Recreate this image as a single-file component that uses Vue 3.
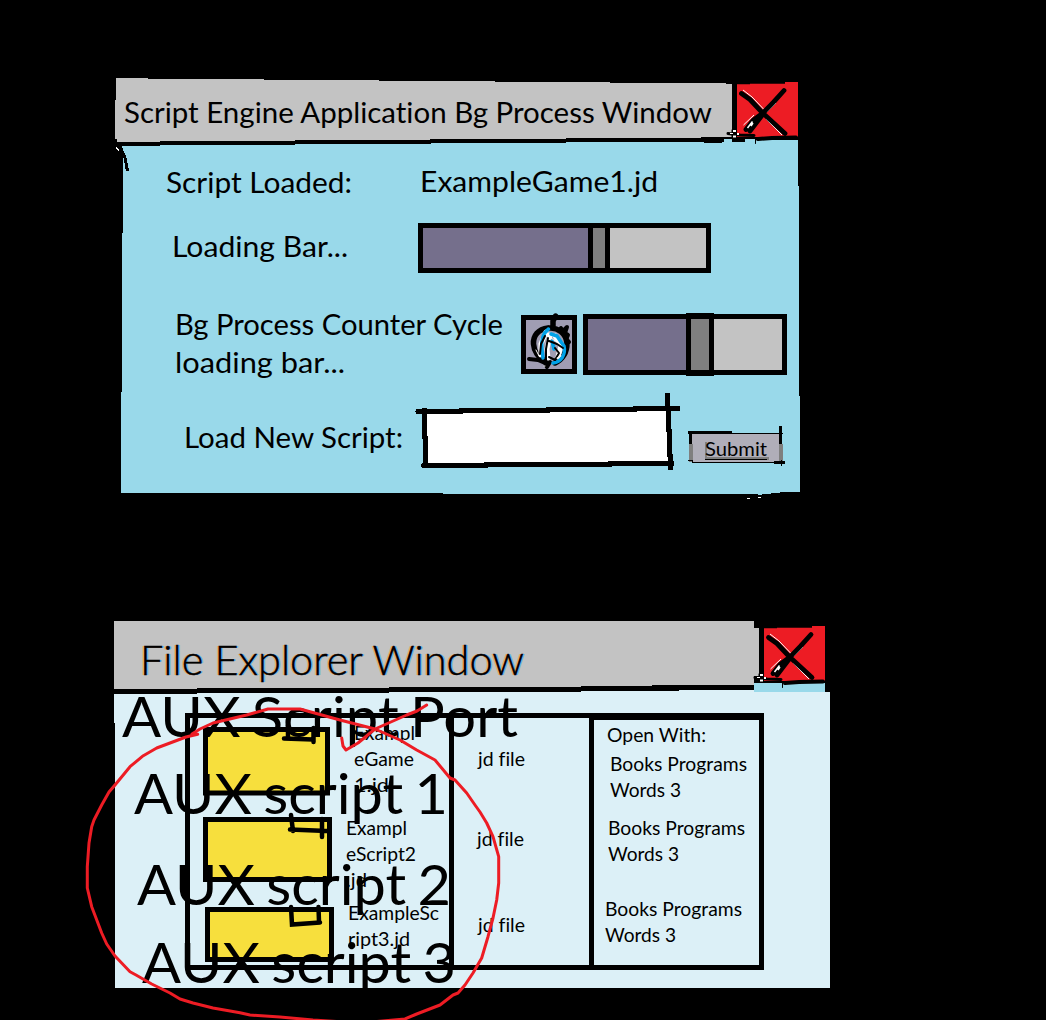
<script setup>
// Stretches a line of text horizontally until it spans the given width.
const vFit = {
  mounted(el, { value }) {
    const natural = el.getBoundingClientRect().width
    el.style.width = `${value}px`
    el.style.transform = `scaleX(${(value / natural).toFixed(4)})`
  },
}

const files = [
  { id: 'one', lines: [['Exampl', 61], ['eGame', 60], ['1.jd', 35]], tab: 'M85 -2V10M81 11.5L110 12.5M110.5 1V15' },
  { id: 'two', lines: [['Exampl', 61], ['eScript2', 70], ['.jd', 21]], tab: 'M88 -2L90 14M87 12.5L124 14M119 2V20' },
  { id: 'three', lines: [['ExampleSc', 91], ['ript3.jd', 62]], tab: 'M86 0L87 17.5L115 15.5M113.5 0L114 15' },
]
const programs = ['first', 'second', 'third']
const notes = [
  { text: 'AUX Script Port', width: 396, id: 'port' },
  { text: 'AUX script 1', width: 314, id: 'n1' },
  { text: 'AUX script 2', width: 314, id: 'n2' },
  { text: 'AUX script 3', width: 314, id: 'n3' },
]
</script>

<template>
  <main class="desktop">
    <svg class="defs" width="0" height="0">
      <symbol id="close" viewBox="-8 0 76 62">
        <path fill="#ed1c24" d="M5 2.3H18V1.7H53V0H66V55H5Z" />
        <path fill="none" stroke="#fff" stroke-width="1" d="M11 8L20 15L32 27.500M34 37L50 53M35 30L44 21M11.500 43L22 33" />
        <g fill="none" stroke="#000" stroke-linecap="round" stroke-linejoin="round">
          <path stroke-width="4.800" d="M9.500 11.500L18 17.500L30.700 31L53 51.500M52 8.500L41.300 20.300L30.700 31.300L21 38.500L14 47.500M31 32L18 49" />
          <path stroke-width="3" d="M-4 51.500L8 53L22 53.500" />
          <path stroke-width="4" d="M26 57L40 56L64 55.500" />
          <path stroke-width="1" d="M23.500 56V61.500M0 48V55" />
        </g>
        <path stroke="#fff" stroke-width="1.500" fill="none" d="M15.500 46L20.500 39.500M19 44L21 41" />
        <path fill="#fff" d="M1 48h3v2h-3zM-2 51h3v1h-3zM5 51h2v2h-2zM1 53.500h3v2h-3z" />
      </symbol>
    </svg>

    <section class="window engine">
      <svg class="backdrop" width="700" height="430" viewBox="110 70 700 430" shape-rendering="crispEdges">
        <path fill="#c3c3c3" d="M116 78H148V79H264V80H379V81H495V82H610V83H726V84H732V137H701V138H566V139H430V140H295V141H160V142H117V139H115V100H116Z" />
        <path fill="#99d9ea" d="M120 146H160V145H295V144H431V143H566V142H704V143H718V142H724V139H798V186H799V396H800V492H785L758 495V494H443V493H121V392H122V233H123V153Z" />
        <path fill="none" stroke="#000" stroke-width="5" d="M704 140H722M732 139.500H745" />
        <path fill="none" stroke="#000" stroke-width="3" d="M755 138.500H798M120 146L125 158L127.500 171" />
        <path fill="none" stroke="#fff" stroke-width="1" d="M116 147L119 151M747 498.500h3M758 497.500h3" />
      </svg>
      <header class="bar">
        <h1 v-fit="588" class="text">Script Engine Application Bg Process Window</h1>
        <svg class="close" width="76" height="62"><use href="#close" /></svg>
      </header>

      <div class="row loaded">
        <span v-fit="186" class="text">Script Loaded:</span>
        <span v-fit="238" class="text value">ExampleGame1.jd</span>
      </div>
      <div class="row loading">
        <span v-fit="176" class="text">Loading Bar...</span>
        <div class="meter"><i class="done"></i><i class="thumb"></i></div>
      </div>
      <div class="row cycle">
        <p class="label">
          <span v-fit="328" class="text">Bg Process Counter Cycle</span>
          <span v-fit="170" class="text">loading bar...</span>
        </p>
        <svg class="spinner" width="56" height="61" viewBox="0 -2 56 61">
          <rect x="2.500" y="2.500" width="51" height="54" fill="#a09db3" stroke="#000" stroke-width="5" />
          <g fill="none" stroke-linecap="round" stroke-linejoin="round">
            <path stroke="#000" stroke-width="5.500" d="M34.500 1L32 6V13M27 13C17 14 12 21 12.500 29C13 36 17 43 25 46M28 13C37 12 45 19 46 28C46 37 42 44 34 48" />
            <path stroke="#000" stroke-width="4" d="M40 13L42 16L46 12L44 18L47 20L45 24L48 27M8 44L17 45L24 48L26 52L29 47" />
            <path stroke="#fff" stroke-width="5" d="M25 17L20 29L20 40M29 20L26 34L27 43M34 21L40 31L37 42" />
            <path stroke="#00a2e8" stroke-width="3.500" d="M27.500 14C21 19 20 27 21 34L22 43M30 19L36 21L40 27L43 31C45 40 40 47 32 48M31 26L33 34" />
            <path stroke="#000" stroke-width="2" d="M24 21L20 29L19 39M27 23L25 34V47M28 26L36 29L42 33M34 33L38 38L34 45L28 42" />
            <path stroke="#fff" stroke-width="1" d="M15 35L18 41M29 22L34 26M36 43L40 41M23 51h1" />
          </g>
        </svg>
        <div class="meter small"><i class="done"></i><i class="thumb"></i></div>
      </div>
      <div class="row load">
        <span v-fit="219" class="text">Load New Script:</span>
        <svg class="field" width="268" height="80" viewBox="414 391 268 80" shape-rendering="crispEdges">
          <path fill="#fff" d="M425 411L668 408L670 463L426 466Z" />
          <path fill="none" stroke="#000" stroke-width="5" stroke-linecap="round" d="M418 411.500H461M461 410.500H548M548 409.500H635M635 408.500H678M424.500 410V437M425.500 438V466M423.500 465.500H486M486 464.500H610M610 463.500H672M667.500 395V408M668.500 408V430M669.500 431V455M670.500 456V468" />
        </svg>
        <div class="submit">
          <svg class="edge" width="100" height="44" viewBox="686 424 100 44" shape-rendering="crispEdges">
            <path fill="#b0aeb9" d="M690 433H782V462H690Z" />
            <path fill="#7f7f7f" d="M689 444H693V462H689ZM779 444H783V462H779ZM705 442H707V459H705ZM705 457H769V460H705Z" />
            <path fill="none" stroke="#000" stroke-width="3" d="M688 432.500H732M690.500 433V444M780.500 426V444M774 462.500H785" />
            <path fill="none" stroke="#000" stroke-width="1" d="M732 433.500H783M688 460.500H692V462.500H780M781.500 460V466" />
          </svg>
          <span v-fit="62" class="text tiny">Submit</span>
        </div>
      </div>
    </section>

    <section class="window explorer">
      <svg class="backdrop" width="722" height="370" viewBox="112 620 722 370" shape-rendering="crispEdges">
        <path fill="#c3c3c3" d="M114 621H754V628H759V676H754V685H652V686H581V687H389V688H197V689H114Z" />
        <path fill="#dcf0f7" d="M114 694H197V693H389V692H581V691H679V690H754V692H830V988H115V723H114Z" />
        <path fill="#99d9ea" d="M754 683H825V692H754Z" />
      </svg>
      <header class="bar">
        <h2 v-fit="384" class="text large">File Explorer Window</h2>
        <svg class="close" width="76" height="62"><use href="#close" /></svg>
      </header>

      <div class="table">
        <div class="column names">
          <div v-for="file in files" :key="file.id" class="entry" :class="file.id">
            <svg class="folder" width="130" height="70" viewBox="0 0 130 70">
              <rect x="2.500" y="2.500" class="body" />
              <path fill="none" stroke="#000" stroke-width="4.500" stroke-linecap="round" :d="file.tab" />
            </svg>
            <p class="name">
              <span v-for="[line, width] in file.lines" :key="line" v-fit="width" class="text tiny">{{ line }}</span>
            </p>
          </div>
        </div>
        <div class="column kinds">
          <span v-for="p in programs" :key="p" v-fit="47" class="text tiny" :class="p">jd file</span>
        </div>
        <div class="column apps">
          <span v-fit="99" class="text tiny heading">Open With:</span>
          <p v-for="p in programs" :key="p" class="program" :class="p">
            <span v-fit="137" class="text tiny">Books Programs</span>
            <span v-fit="71" class="text tiny">Words 3</span>
          </p>
        </div>
      </div>
    </section>

    <div class="notes">
      <span v-for="note in notes" :key="note.id" v-fit="note.width" class="text huge" :class="note.id">{{ note.text }}</span>
    </div>

    <svg class="pen" width="1046" height="1020" viewBox="0 0 1046 1020">
      <path d="M197.700 734.300L186 737L156.700 748L143.300 755.700L130 766.700L115 785L109 792L101.700 805L94 820L91.700 826.700L89 843L87.300 866.700V888L91.700 906.700L101.700 933L106.700 944L115 956L130 971.700L136 975L151.700 984L170 993L180 999L193 1003L213 1008L240 1012.700L250 1015L280 1017L313 1020L360 1023L405 1019L416.700 1014L440 1005L453 995L458 993L465 985L473 973L481.700 958L488 936.700L493 918L496.700 900L498.700 883V856.700L493 836.700L486.700 823L480 812L475 805L466.700 793L455 780L450 778L435 760L416.700 750L400 740L375 729L340 720L300 709H268L246.700 715L213 723L200 729L192 734" />
      <path d="M426.700 705L417 711L406.700 715L375 729L358 743L346 750L343 746L341.700 738" />
    </svg>
  </main>
</template>

<style>
body {
  margin: 0;
  background: #000;
}
</style>

<style scoped>
.desktop {
  position: relative;
  width: 1046px;
  height: 1020px;
  overflow: hidden;
  background: #000;
  color: #000;
  font-family: Lato, sans-serif;
  font-variant-ligatures: none;
}
.defs {
  position: absolute;
}
svg {
  display: block;
  flex: none;
  overflow: visible;
}
p,
h1,
h2 {
  margin: 0;
}
.text {
  display: block;
  width: fit-content;
  flex: none;
  white-space: pre;
  font-size: 28.5px;
  font-weight: 400;
  line-height: 38px;
  transform-origin: 0 0;
}
.text.tiny {
  font-size: 19px;
  line-height: 26px;
}
.text.huge {
  font-size: 57px;
  line-height: 70px;
  word-spacing: -0.06em;
}
.text.large {
  font-size: 42px;
  line-height: 50px;
  font-weight: 300;
  -webkit-text-stroke: 0.5px #000;
  text-shadow: -1.5px 0 #f0b070, 1.5px 0 #6cb8f0;
}
.window {
  position: absolute;
  display: flex;
  flex-direction: column;
}
.window > * {
  position: relative;
}
.window > .backdrop {
  position: absolute;
}
.bar,
.row {
  display: flex;
  align-items: flex-start;
  box-sizing: border-box;
}
.bar {
  justify-content: space-between;
}

.engine {
  left: 116px;
  top: 78px;
  width: 684px;
  height: 416px;
}
.engine .backdrop {
  left: -6px;
  top: -8px;
}
.engine .bar {
  height: 64px;
  padding: 15px 0 0 8px;
}
.engine .close {
  margin-top: -11px;
}
.loaded {
  height: 72px;
  padding: 21px 0 0 50px;
}
.value {
  margin: -1px 0 0 68px;
}
.loading {
  height: 76px;
  padding: 13px 0 0 56px;
}
.meter {
  display: flex;
  box-sizing: border-box;
  width: 293px;
  height: 50px;
  margin: -4px 0 0 70px;
  border: 5px solid #000;
  background: #c3c3c3;
}
.done {
  width: 165px;
  background: #756f8c;
}
.thumb {
  width: 12px;
  border: solid #000;
  border-width: 0 5px;
  background: #7f7f7f;
}
.cycle {
  height: 100px;
  padding: 15px 0 0 59px;
}
.label {
  width: 346px;
}
.spinner {
  margin-top: 8px;
}
.meter.small {
  width: 204px;
  height: 61px;
  margin: 9px 0 0 6px;
}
.small .done {
  width: 98px;
}
.small .thumb {
  width: 18px;
  margin: -6px 0;
  border-width: 6px 5px;
}
.load {
  height: 104px;
  padding: 28px 0 0 68px;
}
.field {
  margin: -27px 0 0 11px;
}
.submit {
  position: relative;
  width: 100px;
  height: 44px;
  margin: 6px 0 0 4px;
}
.submit .edge {
  position: absolute;
}
.submit .text {
  position: relative;
  margin: 12px 0 0 19px;
  text-decoration: underline;
  text-decoration-thickness: 1px;
  text-underline-offset: 3px;
}

.explorer {
  left: 114px;
  top: 621px;
  width: 716px;
  height: 367px;
}
.explorer .backdrop {
  left: -2px;
  top: -1px;
}
.explorer .bar {
  height: 92px;
  padding: 13px 3px 0 26px;
}
.explorer .close {
  margin: -8px 0 0;
}
.table {
  display: grid;
  grid-template-columns: 264px 140px 175px;
  width: 579px;
  height: 257px;
  margin-left: 71px;
}
.column {
  display: flex;
  flex-direction: column;
  align-items: flex-start;
  box-sizing: border-box;
  height: 257px;
  border: solid #000;
  border-width: 5px 0 5px 5px;
}
.apps {
  border-width: 7px 5px 5px;
}
.entry {
  display: flex;
  flex: none;
  height: 90px;
}
.one {
  padding: 9px 0 0 13px;
}
.two {
  padding-left: 13px;
}
.three {
  height: 58px;
  padding-left: 15px;
}
.body {
  width: 122px;
  height: 63.500px;
  fill: #f7df3d;
  stroke: #000;
  stroke-width: 5px;
}
.two .body {
  width: 124px;
  height: 60px;
}
.three .body {
  width: 124px;
  height: 50px;
}
.one .name {
  margin: -7px 0 0 21px;
}
.two .name {
  margin: -2px 0 0 13px;
}
.three .name {
  margin: -7px 0 0 13px;
}
.kinds .first {
  margin: 28px 0 0 24px;
}
.kinds .second {
  margin: 54px 0 0 23px;
}
.kinds .third {
  margin: 60px 0 0 24px;
}
.heading {
  margin: 2px 0 0 13px;
}
.program.first {
  margin: 3px 0 0 16px;
}
.program.second {
  margin: 12px 0 0 14px;
}
.program.third {
  margin: 29px 0 0 11px;
}

.notes {
  position: absolute;
  left: 122px;
  top: 680px;
  display: flex;
  flex-direction: column;
}
.n1 {
  margin: 7px 0 0 12px;
}
.n2 {
  margin: 21px 0 0 15px;
}
.n3 {
  margin: 8px 0 0 20px;
}
.pen {
  position: absolute;
  left: 0;
  top: 0;
  fill: none;
  stroke: #ed1c24;
  stroke-width: 3px;
  stroke-linejoin: round;
  stroke-linecap: round;
}
</style>
